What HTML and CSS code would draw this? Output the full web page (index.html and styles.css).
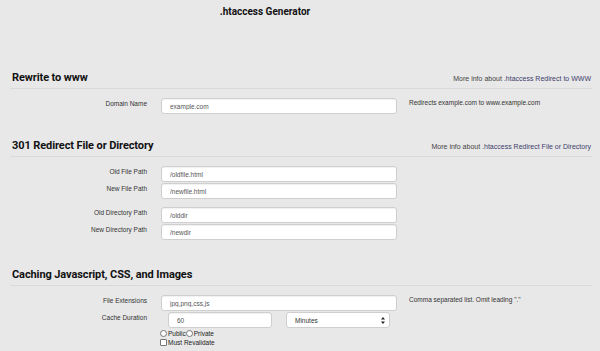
FILE: index.html
```html
<!DOCTYPE html>
<html>
<head>
	<title>.htaccess Generator</title>
	<link rel="stylesheet" href="styles.css">
</head>
<body>
	<h1 class="pagetitle">.htaccess Generator</h1>

	<div class="section first">
		<div class="sectionhead">
			<h2>Rewrite to www</h2>
			<span class="moreinfo">More info about <a href="#">.htaccess Redirect to WWW</a></span>
		</div>
		<div class="row">
			<label>Domain Name</label>
			<input class="field" type="text" placeholder="example.com">
			<span class="help">Redirects example.com to www.example.com</span>
		</div>
	</div>

	<div class="section">
		<div class="sectionhead">
			<h2>301 Redirect File or Directory</h2>
			<span class="moreinfo">More info about <a href="#">.htaccess Redirect File or Directory</a></span>
		</div>
		<div class="row">
			<label>Old File Path</label>
			<input class="field" type="text" placeholder="/oldfile.html">
		</div>
		<div class="row tight">
			<label>New File Path</label>
			<input class="field" type="text" placeholder="/newfile.html">
		</div>
		<div class="row spaced">
			<label>Old Directory Path</label>
			<input class="field" type="text" placeholder="/olddir">
		</div>
		<div class="row tight">
			<label>New Directory Path</label>
			<input class="field" type="text" placeholder="/newdir">
		</div>
	</div>

	<div class="section last">
		<div class="sectionhead">
			<h2>Caching Javascript, CSS, and Images</h2>
		</div>
		<div class="row">
			<label>File Extensions</label>
			<input class="field" type="text" value="jpg,png,css,js">
			<span class="help">Comma separated list. Omit leading "."</span>
		</div>
		<div class="row tight">
			<label>Cache Duration</label>
			<div class="duration">
				<input class="field short" type="text" value="60">
				<div class="selectbox">
					Minutes
					<svg width="4" height="7" viewBox="0 0 4 7"><path d="M2 0 L4 2.6 L0 2.6 Z M2 7 L4 4.4 L0 4.4 Z" fill="#222"/></svg>
				</div>
			</div>
		</div>
		<div class="options">
			<div><span class="radio"></span>Public<span class="radio"></span>Private</div>
			<div><span class="check"></span>Must Revalidate</div>
		</div>
	</div>
</body>
</html>
```

FILE: styles.css
```css
body {
	margin: 0;
	background-color: #e8e8e8;
	font-family: "Liberation Sans", Arial, sans-serif;
	color: #333;
	overflow: hidden;
}
.pagetitle {
	margin: 0;
	padding: 5px 70px 0 0;
	text-align: center;
	font-family: Roboto, sans-serif;
	font-size: 10px;
	line-height: 14px;
	color: #111;
}
.section {
	margin-top: 24px;
}
.section.first {
	margin-top: 51px;
}
.section.last {
	margin-top: 27px;
}
.sectionhead {
	display: flex;
	justify-content: space-between;
	align-items: baseline;
	margin: 0 8px 0 10px;
	padding: 0 1px 2px 2px;
	border-bottom: 1px solid #dadada;
}
.sectionhead h2 {
	margin: 0;
	font-family: Roboto, sans-serif;
	font-size: 11px;
	letter-spacing: -0.1px;
	line-height: 16px;
	color: #111;
}
.moreinfo {
	font-size: 7px;
	color: #444;
}
.moreinfo a {
	color: #3d3d6b;
	text-decoration: none;
}
.row {
	display: grid;
	grid-template-columns: 137px 236px auto;
	column-gap: 13px;
	margin: 9px 0 0 10px;
	align-items: start;
}
.row.tight {
	margin-top: 1px;
}
.row.spaced {
	margin-top: 8px;
}
.row label {
	text-align: right;
	font-size: 6.5px;
	padding-top: 2px;
	color: #333;
}
.field {
	box-sizing: border-box;
	width: 236px;
	height: 16px;
	margin-left: 1px;
	padding: 0 8px;
	border: 1px solid #cfcfcf;
	border-radius: 3px;
	background: white;
	font-family: "Liberation Sans", Arial, sans-serif;
	font-size: 6.5px;
	color: #555;
	box-shadow: inset 0 1px 1px rgba(0,0,0,0.06);
	outline: none;
}
.field::placeholder {
	color: #555;
}
.help {
	font-size: 6.5px;
	padding-top: 1px;
	color: #333;
}
.duration {
	display: flex;
	gap: 14px;
	padding-left: 8px;
}
.field.short {
	width: 104px;
	margin: 0;
}
.selectbox {
	box-sizing: border-box;
	width: 104px;
	height: 16px;
	display: flex;
	align-items: center;
	justify-content: space-between;
	padding: 0 4px 0 8px;
	border: 1px solid #cfcfcf;
	border-radius: 3px;
	background: white;
	font-size: 6.5px;
	color: #333;
}
.options {
	margin: 1px 0 0 160px;
	font-size: 6.5px;
	line-height: 9px;
	color: #222;
}
.radio, .check {
	display: inline-block;
	box-sizing: border-box;
	width: 7px;
	height: 7px;
	border: 1px solid #777;
	background: white;
	vertical-align: -1px;
	margin-right: 1px;
	border-radius: 50%;
}
.check {
	border-radius: 1px;
}
```
